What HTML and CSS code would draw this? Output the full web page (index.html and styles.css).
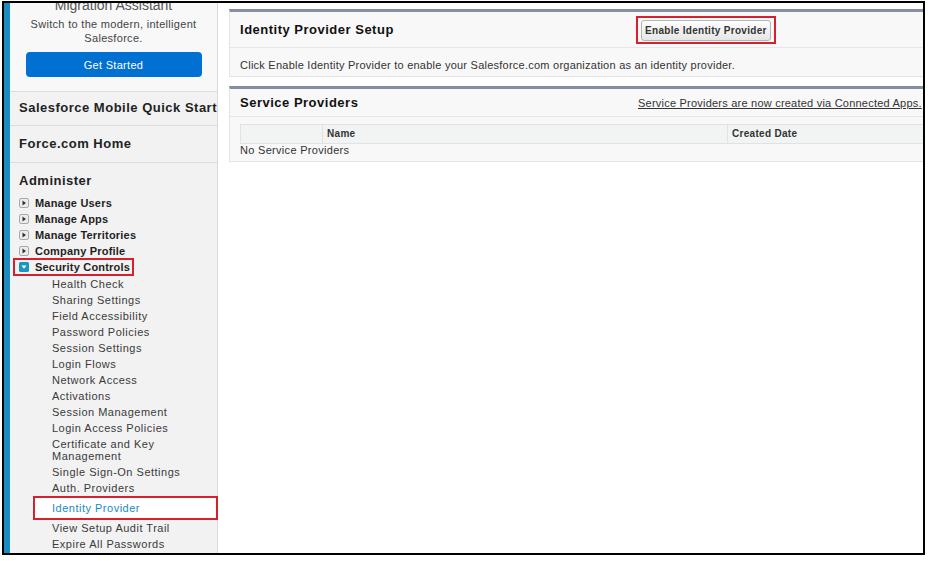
FILE: index.html
```html
<!DOCTYPE html>
<html>
<head>
<meta charset="utf-8">
<link rel="stylesheet" href="styles.css">
</head>
<body>
<div class="frame">
  <div class="stripe"></div>
  <aside class="sidebar">
    <div class="promo">
      <div class="promo-title">Migration Assistant</div>
      <p class="promo-text">Switch to the modern, intelligent<br>Salesforce.</p>
      <button class="btn-primary">Get Started</button>
    </div>
    <div class="sec sec-mobile">Salesforce Mobile Quick Start</div>
    <div class="sec sec-home">Force.com Home</div>
    <div class="sec sec-admin">
      <div class="sec-title">Administer</div>
      <ul class="tree">
        <li class="tree-item"><span class="tree-label"><svg class="tree-icon" width="10" height="10" viewBox="0 0 10 10"><rect x="0.5" y="0.5" width="9" height="9" rx="1.5" fill="#ececec" stroke="#a9a9a9"/><path d="M3.5 2.5 L7 5 L3.5 7.5 Z" fill="#333"/></svg>Manage Users</span></li>
        <li class="tree-item"><span class="tree-label"><svg class="tree-icon" width="10" height="10" viewBox="0 0 10 10"><rect x="0.5" y="0.5" width="9" height="9" rx="1.5" fill="#ececec" stroke="#a9a9a9"/><path d="M3.5 2.5 L7 5 L3.5 7.5 Z" fill="#333"/></svg>Manage Apps</span></li>
        <li class="tree-item"><span class="tree-label"><svg class="tree-icon" width="10" height="10" viewBox="0 0 10 10"><rect x="0.5" y="0.5" width="9" height="9" rx="1.5" fill="#ececec" stroke="#a9a9a9"/><path d="M3.5 2.5 L7 5 L3.5 7.5 Z" fill="#333"/></svg>Manage Territories</span></li>
        <li class="tree-item"><span class="tree-label"><svg class="tree-icon" width="10" height="10" viewBox="0 0 10 10"><rect x="0.5" y="0.5" width="9" height="9" rx="1.5" fill="#ececec" stroke="#a9a9a9"/><path d="M3.5 2.5 L7 5 L3.5 7.5 Z" fill="#333"/></svg>Company Profile</span></li>
        <li class="tree-item tree-item-open"><span class="tree-label"><svg class="tree-icon" width="10" height="10" viewBox="0 0 10 10"><rect x="0" y="0" width="10" height="10" rx="1.5" fill="#1797c0"/><path d="M2.5 3.5 L7.5 3.5 L5 6.8 Z" fill="#fff"/></svg>Security Controls</span></li>
      </ul>
      <ul class="sub">
        <li class="sub-item">Health Check</li>
        <li class="sub-item">Sharing Settings</li>
        <li class="sub-item">Field Accessibility</li>
        <li class="sub-item">Password Policies</li>
        <li class="sub-item">Session Settings</li>
        <li class="sub-item">Login Flows</li>
        <li class="sub-item">Network Access</li>
        <li class="sub-item">Activations</li>
        <li class="sub-item">Session Management</li>
        <li class="sub-item">Login Access Policies</li>
        <li class="sub-item">Certificate and Key Management</li>
        <li class="sub-item">Single Sign-On Settings</li>
        <li class="sub-item">Auth. Providers</li>
        <li class="sub-item sub-item-active">Identity Provider</li>
        <li class="sub-item">View Setup Audit Trail</li>
        <li class="sub-item">Expire All Passwords</li>
      </ul>
    </div>
  </aside>
  <main class="main">
    <section class="panel">
      <div class="panel-head panel-head-tall">
        <h2 class="panel-title title-setup">Identity Provider Setup</h2>
        <div class="highlight-box"><button class="btn">Enable Identity Provider</button></div>
      </div>
      <div class="panel-body">Click Enable Identity Provider to enable your Salesforce.com organization as an identity provider.</div>
    </section>
    <section class="panel panel-second">
      <div class="panel-head">
        <h2 class="panel-title title-sp">Service Providers</h2>
        <a class="panel-link">Service Providers are now created via Connected Apps.</a>
      </div>
      <div class="panel-table-wrap">
        <div class="table-head">
          <div class="th th-action"></div>
          <div class="th th-name">Name</div>
          <div class="th th-date">Created Date</div>
        </div>
        <div class="table-empty">No Service Providers</div>
      </div>
    </section>
  </main>
</div>
</body>
</html>
```

FILE: styles.css
```css
body {
  margin: 0;
  background: #fff;
  font-family: "Liberation Sans", Arial, sans-serif;
  color: #333;
}

.frame {
  box-sizing: border-box;
  width: 923px;
  height: 554px;
  margin: 1px 0 0 2px;
  border: 2px solid #000;
  display: flex;
  overflow: hidden;
  background: #fff;
}

.stripe {
  flex: 0 0 6px;
  background: #1a8cbf;
}

.sidebar {
  flex: 0 0 207px;
  background: #f2f2f2;
  border-right: 1px solid #dadada;
}

.promo {
  background: #f8f8f8;
  text-align: center;
  padding-bottom: 14px;
}

.promo-title {
  margin-top: -6px;
  font-size: 14px;
  line-height: 16px;
  color: #555;
}

.promo-text {
  margin: 4px 0 0;
  font-size: 11px;
  line-height: 14px;
  letter-spacing: 0.3px;
  color: #444;
}

.btn-primary {
  display: block;
  margin: 7px auto 0;
  width: 176px;
  height: 25px;
  border: none;
  border-radius: 4px;
  background: #0070d2;
  color: #fff;
  font-family: inherit;
  font-size: 11px;
  letter-spacing: 0.3px;
  padding: 0;
}

.sec {
  border-top: 1px solid #dcdcdc;
  padding-left: 9px;
  font-size: 13px;
  line-height: 16px;
  font-weight: bold;
  letter-spacing: 0.5px;
  color: #222;
}

.sec-mobile {
  padding-top: 8px;
  padding-bottom: 9px;
  white-space: nowrap;
  overflow: hidden;
}

.sec-home {
  padding-top: 10px;
  padding-bottom: 10px;
}

.sec-admin {
  padding-top: 10px;
}

.tree,
.sub {
  list-style: none;
  margin: 0;
  padding: 0;
}

.tree {
  margin-top: 6px;
}

.sub {
  margin-top: 1px;
}

.tree-item {
  display: flex;
  align-items: center;
  height: 16px;
  font-size: 11px;
  letter-spacing: 0.2px;
  color: #1f1f1f;
}

.tree-label {
  display: flex;
  align-items: center;
}

.tree-icon {
  flex: 0 0 auto;
  margin-right: 6px;
}

.tree-item-open .tree-label {
  box-sizing: border-box;
  height: 18px;
  margin-left: -6px;
  padding: 0 2px 0 4px;
  border: 2px solid #d6202e;
}

.sub-item {
  padding: 2px 0 2px 33px;
  font-size: 11px;
  line-height: 12px;
  font-weight: normal;
  letter-spacing: 0.5px;
  color: #3a3a3a;
}

.sub-item-active {
  position: relative;
  margin: 0 -1px 0 14px;
  padding: 0 0 0 17px;
  border: 2px solid #d6202e;
  background: #fff;
  line-height: 20px;
  color: #1b8ac4;
}

.main {
  flex: 1;
  min-width: 0;
  padding: 6px 0 0 11px;
  background: #fff;
}

.panel {
  margin-right: -20px;
  background: #f8f8f8;
  border: 1px solid #e3e3e3;
  border-top: 3px solid #868ea0;
}

.panel-second {
  margin-top: 9px;
}

.panel-head {
  display: flex;
  align-items: center;
  height: 27px;
  padding-left: 10px;
  border-bottom: 1px solid #e6e6e6;
}

.panel-head-tall {
  height: 35px;
}

.panel-title {
  margin: 0;
  font-size: 13px;
  line-height: 16px;
  font-weight: bold;
  letter-spacing: 0.5px;
  color: #111;
}

.title-setup {
  flex: 0 0 396px;
}

.title-sp {
  flex: 0 0 398px;
}

.highlight-box {
  border: 2px solid #d6202e;
  padding: 2px 3px 1px;
  display: flex;
}

.btn {
  height: 21px;
  padding: 0 3px;
  border: 1px solid #b5b5b5;
  border-radius: 3px;
  background: linear-gradient(#fdfdfd, #e6e6e6);
  font-family: inherit;
  font-size: 10px;
  font-weight: bold;
  letter-spacing: 0.3px;
  color: #333;
}

.panel-body {
  padding: 10px 10px 4px;
  font-size: 11px;
  line-height: 14px;
  letter-spacing: 0.24px;
  color: #333;
}

.panel-link {
  font-size: 11px;
  letter-spacing: 0.22px;
  color: #333;
  text-decoration: underline;
  white-space: nowrap;
}

.panel-table-wrap {
  padding: 7px 10px 4px;
}

.table-head {
  display: flex;
  height: 20px;
  box-sizing: border-box;
  background: #f2f3f3;
  border: 1px solid #e0e3e5;
  border-right: none;
}

.th {
  font-size: 10px;
  line-height: 18px;
  font-weight: bold;
  letter-spacing: 0.3px;
  color: #333;
  padding-left: 4px;
}

.th-action {
  flex: 0 0 77px;
}

.th-name {
  flex: 0 0 400px;
  border-left: 1px solid #e0e3e5;
}

.th-date {
  flex: 1;
  border-left: 1px solid #e0e3e5;
}

.table-empty {
  font-size: 11px;
  line-height: 13px;
  letter-spacing: 0.3px;
  color: #333;
}
```
